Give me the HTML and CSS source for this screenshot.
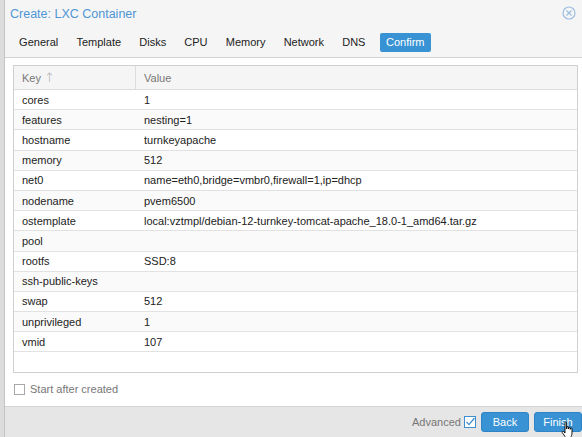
FILE: index.html
```html
<!DOCTYPE html>
<html>
<head>
<meta charset="utf-8">
<link rel="stylesheet" href="styles.css">
</head>
<body>
<div class="backdrop">
  <div class="strip"></div>
  <div class="dialog">
    <div class="header">
      <div class="title">Create: LXC Container</div>
      <svg class="close" width="14" height="14" viewBox="0 0 14 14"><circle cx="7" cy="7" r="6" fill="none" stroke="#9dbde2" stroke-width="1.2"/><path d="M4.5 4.5 L9.5 9.5 M9.5 4.5 L4.5 9.5" stroke="#9dbde2" stroke-width="1.2"/></svg>
    </div>
    <div class="tabbar">
      <span class="tab">General</span>
      <span class="tab">Template</span>
      <span class="tab">Disks</span>
      <span class="tab">CPU</span>
      <span class="tab">Memory</span>
      <span class="tab">Network</span>
      <span class="tab">DNS</span>
      <span class="tab active">Confirm</span>
    </div>
    <div class="content">
      <div class="grid">
        <div class="grid-head">
          <div class="col-key">Key <span class="arrow">↑</span></div>
          <div class="col-val">Value</div>
        </div>
        <div class="row"><div class="col-key">cores</div><div class="col-val">1</div></div>
        <div class="row alt"><div class="col-key">features</div><div class="col-val">nesting=1</div></div>
        <div class="row"><div class="col-key">hostname</div><div class="col-val">turnkeyapache</div></div>
        <div class="row alt"><div class="col-key">memory</div><div class="col-val">512</div></div>
        <div class="row"><div class="col-key">net0</div><div class="col-val">name=eth0,bridge=vmbr0,firewall=1,ip=dhcp</div></div>
        <div class="row alt"><div class="col-key">nodename</div><div class="col-val">pvem6500</div></div>
        <div class="row"><div class="col-key">ostemplate</div><div class="col-val">local:vztmpl/debian-12-turnkey-tomcat-apache_18.0-1_amd64.tar.gz</div></div>
        <div class="row alt"><div class="col-key">pool</div><div class="col-val"></div></div>
        <div class="row"><div class="col-key">rootfs</div><div class="col-val">SSD:8</div></div>
        <div class="row alt"><div class="col-key">ssh-public-keys</div><div class="col-val"></div></div>
        <div class="row"><div class="col-key">swap</div><div class="col-val">512</div></div>
        <div class="row alt"><div class="col-key">unprivileged</div><div class="col-val">1</div></div>
        <div class="row"><div class="col-key">vmid</div><div class="col-val">107</div></div>
      </div>
      <label class="start">
        <span class="cbox"></span>
        <span>Start after created</span>
      </label>
    </div>
    <div class="footer">
      <span class="adv">Advanced</span>
      <svg class="advbox" width="12" height="12" viewBox="0 0 12 12"><rect x="0.5" y="0.5" width="11" height="11" fill="#fff" stroke="#3d8fd1"/><path d="M2.5 6 L5 8.6 L10.5 2" fill="none" stroke="#3d8fd1" stroke-width="1.3"/></svg>
      <span class="btn">Back</span>
      <span class="btn">Finish</span>
      <svg class="cursor" width="14" height="18" viewBox="0 0 14 18"><path d="M4 1.5 C4 0.8 5.6 0.8 5.6 1.5 L5.6 8 L5.8 6.2 C5.8 5.5 7.4 5.5 7.4 6.2 L7.4 8 L7.6 6.8 C7.6 6.1 9.2 6.1 9.2 6.8 L9.2 8.4 L9.4 7.5 C9.4 6.8 11 6.8 11 7.5 L11 12 C11 14.5 10 15.5 9.5 16.5 L4.5 16.5 C4 15 2.5 13.5 1.2 11.5 C0.6 10.5 1.8 9.8 2.6 10.6 L4 12 Z" fill="#fff" stroke="#000" stroke-width="0.9" stroke-linejoin="round"/></svg>
    </div>
  </div>
</div>
</body>
</html>
```
FILE: styles.css
```css
* { box-sizing: border-box; }
html, body { margin: 0; padding: 0; }
body {
  width: 582px;
  height: 437px;
  overflow: hidden;
  font-family: "Liberation Sans", Arial, sans-serif;
  background: #d6d6d6;
}
.backdrop {
  display: flex;
  height: 437px;
}
.strip {
  width: 4px;
  flex: none;
  background: #dcdcdc;
}
.dialog {
  flex: none;
  width: 584px;
  height: 437px;
  display: flex;
  flex-direction: column;
  border-left: 1px solid #c4c4c4;
  background: #fff;
}
.header {
  height: 26px;
  background: #f5f5f5;
  display: flex;
  align-items: center;
  padding: 0 0 0 5px;
  position: relative;
}
.title {
  font-size: 12.5px;
  color: #4f95d6;
  padding-top: 1px;
}
.close {
  position: absolute;
  left: 557px;
  top: 6px;
}
.tabbar {
  height: 32px;
  background: #f5f5f5;
  border-bottom: 1px solid #d2d2d2;
  display: flex;
  align-items: flex-start;
  padding: 7px 0 0 5px;
}
.tab {
  font-size: 11px;
  color: #222;
  height: 19px;
  line-height: 19px;
  padding: 0 9.1px;
  border-radius: 2px;
}
.tab.active {
  background: #3892d4;
  color: #fff;
  padding: 0 6.5px;
  margin-left: 5px;
}
.content {
  flex: 1;
  background: #fff;
  padding: 7px 0 0 8px;
}
.grid {
  width: 565px;
  height: 308px;
  border: 1px solid #d0d0d0;
  font-size: 11px;
  color: #222;
}
.grid-head {
  display: flex;
  height: 24px;
  background: #f5f5f5;
  border-bottom: 1px solid #dcdcdc;
  color: #777;
}
.grid-head .col-key {
  border-right: 1px solid #dcdcdc;
}
.arrow { color: #b0b0b0; font-size: 13px; font-family: "DejaVu Sans", sans-serif; font-weight: 200; }
.col-key {
  width: 122px;
  padding-left: 8px;
  display: flex;
  align-items: center;
  gap: 3px;
}
.col-val {
  flex: 1;
  padding-left: 8px;
  display: flex;
  align-items: center;
}
.row {
  display: flex;
  height: 20.2px;
  border-bottom: 1px solid #e2e2e2;
}
.row.alt { background: #fafafa; }
.start {
  display: flex;
  align-items: center;
  gap: 5px;
  margin-top: 10px;
  padding-left: 1px;
  font-size: 11px;
  color: #777;
}
.cbox {
  width: 11px;
  height: 11px;
  border: 1px solid #a8a8a8;
  background: #fff;
}
.footer {
  height: 31px;
  background: #e6e6e6;
  border-top: 1px solid #d4d4d4;
  display: flex;
  align-items: center;
  padding-left: 407px;
  position: relative;
  font-size: 11px;
}
.adv { color: #777; margin-right: 3px; }
.advbox { margin-right: 5px; }
.btn {
  width: 48px;
  height: 20px;
  line-height: 18px;
  text-align: center;
  background: #3892d4;
  border: 1px solid #2e84c6;
  border-radius: 3px;
  color: #fff;
  margin-right: 5px;
}
.cursor {
  position: absolute;
  left: 556px;
  top: 14px;
}
```
